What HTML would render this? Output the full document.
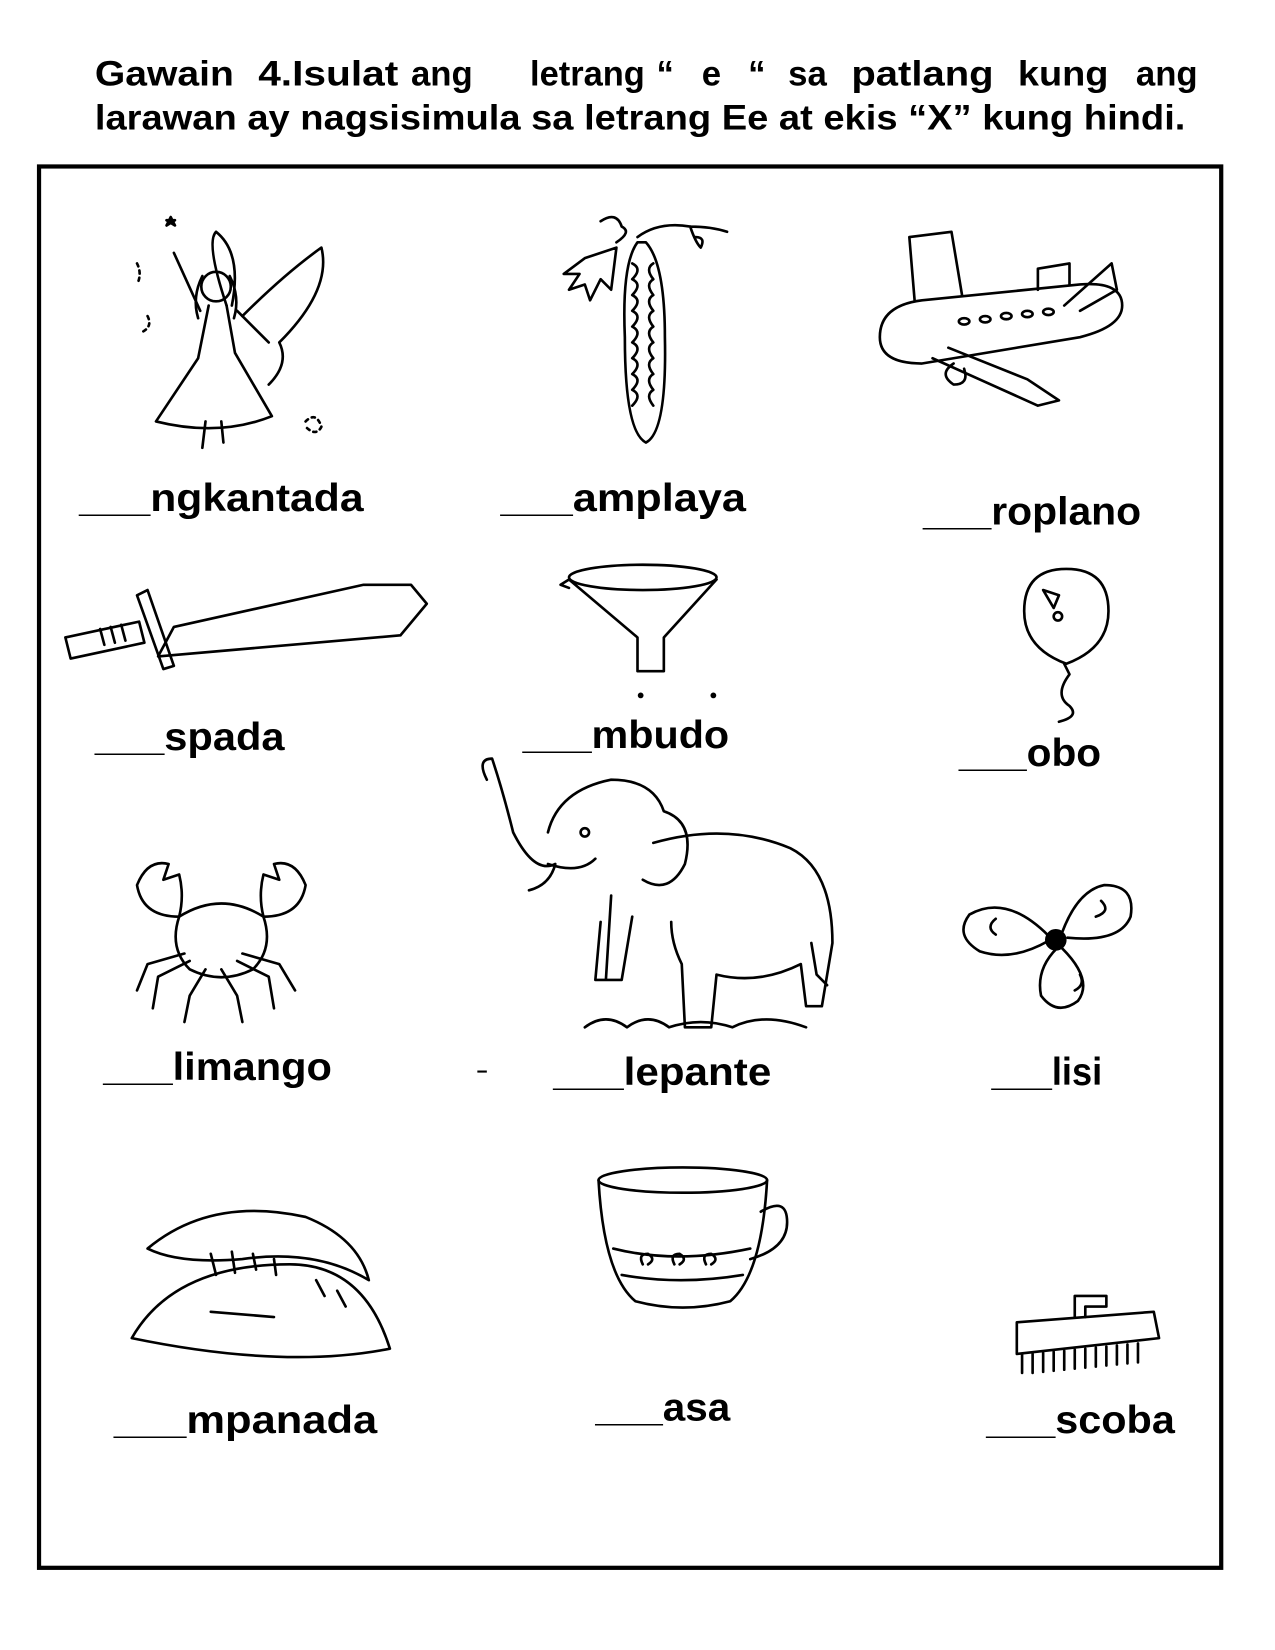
<!DOCTYPE html>
<html><head><meta charset="utf-8"><style>
html,body{margin:0;padding:0;background:#fff}
svg{display:block}
text{font-family:"Liberation Sans",sans-serif;font-weight:bold;fill:#000}
</style></head><body>
<svg width="1275" height="1650" viewBox="0 0 1210 1566" xmlns="http://www.w3.org/2000/svg">
<rect width="1210" height="1566" fill="#fff"/>
<g font-size="33">
<text x="90" y="81" textLength="132" lengthAdjust="spacingAndGlyphs">Gawain</text>
<text x="245" y="81" textLength="133" lengthAdjust="spacingAndGlyphs">4.Isulat</text>
<text x="390" y="81">ang</text>
<text x="503" y="81" textLength="109" lengthAdjust="spacingAndGlyphs">letrang</text>
<text x="623" y="81">“</text>
<text x="666" y="81">e</text>
<text x="710" y="81">“</text>
<text x="748" y="81">sa</text>
<text x="808" y="81" textLength="135" lengthAdjust="spacingAndGlyphs">patlang</text>
<text x="966" y="81" textLength="86" lengthAdjust="spacingAndGlyphs">kung</text>
<text x="1078" y="81">ang</text>
</g>
<text x="90" y="123" font-size="33" textLength="1035" lengthAdjust="spacingAndGlyphs">larawan ay nagsisimula sa letrang Ee at ekis “X”  kung hindi.</text>
<rect x="37" y="158" width="1122" height="1330" fill="none" stroke="#000" stroke-width="4"/>

<g font-size="37">
<text x="75" y="485" textLength="270" lengthAdjust="spacingAndGlyphs">___ngkantada</text>
<text x="475" y="485" textLength="233" lengthAdjust="spacingAndGlyphs">___amplaya</text>
<text x="876" y="498" textLength="207" lengthAdjust="spacingAndGlyphs">___roplano</text>
<text x="90" y="712" textLength="180" lengthAdjust="spacingAndGlyphs">___spada</text>
<text x="496" y="710" textLength="196" lengthAdjust="spacingAndGlyphs">___mbudo</text>
<text x="910" y="727" textLength="135" lengthAdjust="spacingAndGlyphs">___obo</text>
<text x="98" y="1025" textLength="217" lengthAdjust="spacingAndGlyphs">___limango</text>
<text x="525" y="1030" textLength="207" lengthAdjust="spacingAndGlyphs">___lepante</text>
<text x="941" y="1030" textLength="105" lengthAdjust="spacingAndGlyphs">___lisi</text>
<text x="108" y="1360" textLength="250" lengthAdjust="spacingAndGlyphs">___mpanada</text>
<text x="565" y="1348" textLength="128" lengthAdjust="spacingAndGlyphs">___asa</text>
<text x="936" y="1360" textLength="179" lengthAdjust="spacingAndGlyphs">___scoba</text>
</g>
<line x1="453" y1="1017" x2="462" y2="1017" stroke="#000" stroke-width="2"/>

<g fill="none" stroke="#000" stroke-width="2.5" stroke-linecap="round" stroke-linejoin="round">
<circle cx="205" cy="272" r="14"/>
<path d="M192 262 q-10 20 -4 40 M218 262 q10 20 4 40"/>
<path d="M198 290 l-10 50 l-40 60 q60 15 110 -5 l-35 -60 l-8 -45"/>
<path d="M165 240 l25 55 M225 295 l30 30"/>
<path d="M215 290 q-20 -60 -10 -70 q25 20 15 70 M230 300 q40 -40 75 -65 q10 40 -40 90 q10 20 -10 40"/>
<path d="M195 400 l-3 25 M210 400 l2 20"/>
<path d="M158 214 l4 -8 l4 8 l-8 -5 h8 z"/>
<path d="M130 250 q5 10 0 20 M140 300 q5 10 -5 15 M290 400 q10 -10 15 5 q-5 10 -15 0" stroke-dasharray="3 4"/>
<path d="M605 230 q-15 20 -12 90 q0 90 20 100 q20 -10 18 -100 q0 -70 -18 -90 z"/>
<path d="M600 250 q10 5 0 15 q10 5 0 15 q10 5 0 15 q10 5 0 15 q10 5 0 15 q10 5 0 15 q10 5 0 15 q10 5 0 15 q10 5 0 15 M620 250 q-8 5 0 15 q-8 5 0 15 q-8 5 0 15 q-8 5 0 15 q-8 5 0 15 q-8 5 0 15 q-8 5 0 15 q-8 5 0 15 q-8 5 0 15"/>
<path d="M570 210 q15 -10 20 5 q10 5 -5 15 M605 225 q20 -15 50 -10 q20 0 35 5 M655 215 q5 15 10 20 q5 -10 -5 -10"/>
<path d="M585 235 l-30 10 l-20 15 l15 0 l-10 15 l15 -5 l5 15 l10 -20 l10 10 z"/>
<path d="M835 320 q0 -30 40 -35 l150 -15 q40 -3 40 20 q0 20 -40 30 l-150 25 q-40 0 -40 -25 z"/>
<path d="M868 285 l-5 -60 l40 -5 l10 60 M985 275 l0 -20 l30 -5 l0 20 M1010 290 l45 -40 l5 25 l-35 20"/>
<path d="M900 330 l75 30 l30 20 l-20 5 l-100 -45 M905 345 q-15 10 0 20 q15 0 10 -15"/>
<ellipse cx="915" cy="305" rx="5" ry="3"/><ellipse cx="935" cy="303" rx="5" ry="3"/><ellipse cx="955" cy="300" rx="5" ry="3"/><ellipse cx="975" cy="298" rx="5" ry="3"/><ellipse cx="995" cy="296" rx="5" ry="3"/>
<path d="M165 595 l180 -40 l45 0 l15 18 l-25 30 l-230 20 z"/>
<path d="M130 565 l25 70 l10 -3 l-25 -72 z"/>
<path d="M62 605 l70 -15 l5 20 l-70 15 z"/>
<path d="M95 597 l4 15 M105 595 l4 15 M115 593 l4 15"/>
<ellipse cx="610" cy="548" rx="70" ry="12"/>
<path d="M540 550 l65 55 l0 32 l25 0 l0 -32 l50 -55 M540 550 l-8 5 l8 3"/>
<path d="M1012 540 q40 0 40 40 q0 35 -40 50 q-40 -15 -40 -50 q0 -40 40 -40 z"/>
<path d="M1010 630 l5 10 q-15 20 0 30 q10 10 -10 15"/>
<path d="M990 560 l15 5 l-5 12 z"/><circle cx="1004" cy="585" r="4"/>
<circle cx="608" cy="660" r="1.5" fill="#000"/><circle cx="677" cy="660" r="1.5" fill="#000"/>
<path d="M462 740 q-10 -20 5 -20 q10 30 20 70 q20 40 40 30 q-5 20 -25 25 M520 820 q30 10 45 -5"/>
<path d="M520 790 q10 -40 60 -50 q40 0 50 30 q30 10 20 50 q-15 30 -40 15"/>
<path d="M620 800 q70 -20 130 5 q40 20 40 90 l-10 60 l-15 0 l-5 -40 q-40 20 -80 10 l-5 50 l-25 0 l-3 -60 q-10 -20 -10 -40"/>
<path d="M600 870 l-10 60 l-25 0 l5 -55 M580 850 l-5 80"/>
<path d="M770 895 l5 30 l10 10"/>
<circle cx="555" cy="790" r="4"/>
<path d="M555 975 q20 -15 40 0 q20 -15 40 0 q30 -10 60 0 q30 -15 70 0"/>
<path d="M170 870 q40 -25 80 0 q10 30 -10 50 q-30 15 -60 0 q-20 -20 -10 -50 z"/>
<path d="M170 870 q-35 0 -40 -30 q10 -25 30 -20 l-5 15 l15 -5 q5 20 0 40 M250 870 q35 0 40 -30 q-10 -25 -30 -20 l5 15 l-15 -5 q-5 20 0 40"/>
<path d="M175 905 l-35 10 l-10 25 M180 912 l-30 15 l-5 30 M195 920 l-15 25 l-5 25 M230 905 l35 10 l15 25 M225 912 l30 15 l5 30 M210 920 l15 25 l5 25"/>
<circle cx="1002" cy="892" r="9" fill="#000"/>
<path d="M995 888 q-40 -40 -75 -20 q-15 20 10 35 q30 10 65 -10 M1008 885 q15 -40 40 -45 q30 0 25 30 q-10 25 -60 20 M1003 900 q-20 20 -15 45 q15 20 35 5 q15 -20 -15 -50"/>
<path d="M945 872 q-10 8 0 15 M1045 855 q10 10 -5 15 M1025 925 q5 10 -5 15"/>
<path d="M140 1185 q60 -50 150 -30 q50 20 60 60 q-50 -30 -120 -20 q-60 5 -90 -10 z"/>
<path d="M125 1270 q40 -70 150 -70 q70 0 95 80 q-100 20 -245 -10 z"/>
<path d="M200 1190 l5 20 M220 1188 l3 20 M240 1190 l3 15 M260 1195 l2 15 M300 1215 l8 15 M320 1225 l8 15 M200 1245 l60 5"/>
<path d="M568 1120 q5 90 35 115 q45 12 90 0 q30 -25 35 -115"/>
<ellipse cx="648" cy="1120" rx="80" ry="12"/>
<path d="M722 1150 q25 -15 25 10 q0 25 -35 35"/>
<path d="M582 1185 q60 15 130 0 M590 1210 q55 10 115 0"/>
<path d="M610 1200 q-5 -10 5 -10 q8 5 0 10 M640 1200 q-5 -10 5 -10 q8 5 0 10 M670 1200 q-5 -10 5 -10 q8 5 0 10"/>
<path d="M965 1255 l130 -10 l5 25 l-135 15 z"/>
<path d="M1020 1250 l0 -20 l30 0 l0 10 l-20 0 l0 10"/>
<path d="M970 1285 l0 18 M980 1285 l0 18 M990 1284 l0 18 M1000 1283 l0 18 M1010 1282 l0 18 M1020 1281 l0 18 M1030 1280 l0 18 M1040 1279 l0 18 M1050 1278 l0 18 M1060 1277 l0 18 M1070 1276 l0 18 M1080 1275 l0 18"/>
</g>
</svg>
</body></html>
